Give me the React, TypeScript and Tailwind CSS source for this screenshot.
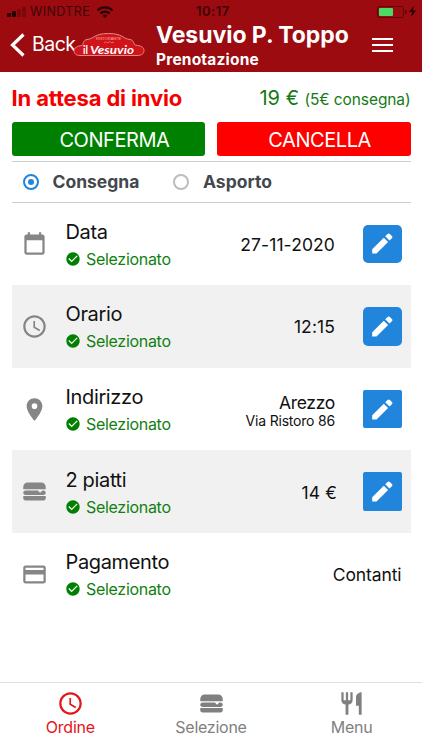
import React, { useState } from 'react';
import {
    MdAccessTime,
    MdCheckCircle,
    MdLocationOn,
    MdPayment,
    MdRestaurant,
    MdWifi,
} from 'react-icons/md';

const BurgerIcon: React.FC<{ className?: string }> = ({ className }) => (
    <svg viewBox="0 0 24 24" fill="currentColor" className={className}>
        <path d="M2 16H22V18C22 19.11 21.11 20 20 20H4C2.89 20 2 19.11 2 18V16M6 4H18C20.22 4 22 5.78 22 8V10H2V8C2 5.78 3.78 4 6 4M4 11H15L17 13L19 11H20C21.11 11 22 11.89 22 13C22 14.11 21.11 15 20 15H4C2.89 15 2 14.11 2 13C2 11.89 2.89 11 4 11Z" />
    </svg>
);

const CalendarIcon: React.FC<{ className?: string }> = ({ className }) => (
    <svg viewBox="0 0 24 24" fill="currentColor" className={className}>
        <path d="M19 20H5V9H19M16 2V4H8V2H6V4H5C3.89 4 3 4.89 3 6V20C3 21.1 3.9 22 5 22H19C20.1 22 21 21.1 21 20V6C21 4.89 20.1 4 19 4H18V2" />
    </svg>
);

const PencilIcon: React.FC<{ className?: string }> = ({ className }) => (
    <svg viewBox="0 0 21 21" fill="currentColor" className={className}>
        <path d="M0.2 20.6V16.3L11.8 4.7L16.1 9L4.5 20.6H0.2Z" />
        <path d="M13.2 3.3L15.6 0.9C16.3 0.2 17.2 0.2 17.9 0.9L19.9 2.9C20.6 3.6 20.6 4.5 19.9 5.2L17.5 7.6L13.2 3.3Z" />
    </svg>
);

const Logo = () => (
    <svg viewBox="0 0 72 26" className="w-[72px] h-[26px] shrink-0">
        <path
            d="M9 13.5C10.5 12.5 10 8 14 7.5C21 7 21 1.5 35.5 1.5S50 7 57 7.5C61 8 60.5 12.5 62.5 13.2C68 13.5 71 15.5 71 18.5S69 23.5 64 23.5H7C3 23.5 1 21.5 1 18.8S4 14 9 13.5Z"
            fill="#d0141a"
            stroke="#e08a88"
            strokeWidth="1"
        />
        <text x="23" y="7.6" fontSize="3.8" textLength="25" fill="#f3b5b3" fontFamily="Liberation Sans, sans-serif">RISTORANTE</text>
        <path d="M31 11L33 9.8L34 10.8L37 9.6L38 10.7L41 10.4" fill="none" stroke="#ee8583" strokeWidth="0.7" />
        <text x="10" y="21.5" fontSize="11.5" textLength="5" lengthAdjust="spacingAndGlyphs" fontWeight="700" fill="#fff" fontFamily="Lato, sans-serif">il</text>
        <text x="17" y="21.5" fontSize="11.5" textLength="44" lengthAdjust="spacingAndGlyphs" fontWeight="700" fontStyle="italic" fill="#fff" fontFamily="Lato, sans-serif">Vesuvio</text>
    </svg>
);

const StatusBar = () => (
    <div className="h-6 flex items-center relative text-[#3d0306] text-[12px]">
        <div className="ml-[7px] flex items-end gap-[1.5px] w-[23px]">
            <span className="w-[3.5px] h-[4px] rounded-[1px] bg-[#250204]" />
            <span className="w-[3.5px] h-[6px] rounded-[1px] bg-[#250204]" />
            <span className="w-[3.5px] h-[8px] rounded-[1px] bg-[#7b080b]" />
            <span className="w-[3.5px] h-[10px] rounded-[1px] bg-[#7b080b]" />
        </div>
        <span className="w-[61px] text-[12.5px] tracking-[0.4px]">WINDTRE</span>
        <MdWifi className="ml-[5px] w-[18px] h-[18px] text-[#250204]" />
        <span className="absolute left-[196px] text-[13px] font-semibold tracking-[0.5px]">10:17</span>
        <div className="absolute left-[377px] top-[6px] w-[27px] h-[12px] rounded-[3px] border border-[#5b0508] p-px">
            <div className="w-[14px] h-full rounded-[1px] bg-[#4cd964]" />
        </div>
        <span className="absolute left-[405px] top-[10px] w-[1.5px] h-[4px] rounded-r bg-[#5b0508]" />
        <svg viewBox="0 0 7 11" className="absolute left-[409px] top-[6px] w-[7px] h-[11px]" fill="#250204">
            <path d="M4.5 0L0 6H3L2.2 11L7 4.5H4L4.5 0Z" />
        </svg>
    </div>
);

const Header = () => (
    <header className="h-[71.5px] bg-[#9b0b10] text-white shrink-0">
        <StatusBar />
        <div className="flex h-[47px]">
            <button className="flex items-center pl-[10px] h-[41px] w-[73px] shrink-0">
                <svg viewBox="0 0 15 24" className="w-[15px] h-[24px] shrink-0" fill="none" stroke="currentColor" strokeWidth="3.2">
                    <path d="M13.5 1.5L2.5 12L13.5 22.5" />
                </svg>
                <span className="ml-[7px] text-[19.5px] tracking-[-0.5px]">Back</span>
            </button>
            <div className="pt-[8px] w-[83px] shrink-0">
                <Logo />
            </div>
            <div className="w-[216px] shrink-0">
                <h1 className="text-[23px] leading-[23px] font-bold tracking-[-0.05px] whitespace-nowrap">Vesuvio P. Toppo</h1>
                <p className="pt-px text-[15.5px] leading-[24px] font-bold tracking-[0.2px]">Prenotazione</p>
            </div>
            {/* hamburger */}
            <button className="mt-[14px] h-[14px] w-[21px] flex flex-col justify-between shrink-0">
                <span className="h-[2px] w-full bg-white" />
                <span className="h-[2px] w-full bg-white" />
                <span className="h-[2px] w-full bg-white" />
            </button>
        </div>
    </header>
);

const ROWS = [
    { icon: CalendarIcon, title: 'Data', value: '27-11-2020' },
    { icon: MdAccessTime, title: 'Orario', value: '12:15' },
    { icon: MdLocationOn, title: 'Indirizzo', value: 'Arezzo', note: 'Via Ristoro 86', square: true },
    { icon: BurgerIcon, title: '2 piatti', value: '14 €', square: true },
    { icon: MdPayment, title: 'Pagamento', value: 'Contanti', fixed: true },
];

const TABS = [
    { icon: MdAccessTime, label: 'Ordine' },
    { icon: BurgerIcon, label: 'Selezione' },
    { icon: MdRestaurant, label: 'Menu' },
];

const App: React.FC = () => {
    const [mode, setMode] = useState('Consegna');
    const [tab, setTab] = useState('Ordine');

    return (
        <div className="w-full h-screen flex flex-col bg-white overflow-hidden font-['Inter',sans-serif] text-[#111]">
            <Header />

            <main className="flex-1 px-[11.5px]">
                <div className="h-[50.5px] flex items-center justify-between">
                    <h2 className="pt-[3px] text-[22px] font-bold text-[#f50000] tracking-[-0.15px]">In attesa di invio</h2>
                    <p className="pt-[3px] text-[#147a14] whitespace-nowrap">
                        <span className="text-[20px]">19 €</span>
                        <span className="ml-[5.5px] text-[15.5px] tracking-[-0.1px]">(5€ consegna)</span>
                    </p>
                </div>

                <div className="flex gap-[11.5px] text-white text-[20px] tracking-[-0.45px]">
                    <button className="flex-1 h-[34px] pt-[2px] pl-3 rounded-[3px] bg-[#008000]">CONFERMA</button>
                    <button className="flex-1 h-[34px] pt-[2px] pl-3 rounded-[3px] bg-[#ff0000]">CANCELLA</button>
                </div>

                <div className="mt-[5px] h-[42px] border-y border-[#cfcfcf] flex items-center pl-[11px]">
                    {['Consegna', 'Asporto'].map(name => (
                        <button key={name} onClick={() => setMode(name)} className="flex items-center w-[150.5px]">
                            <span className={`w-[16px] h-[16px] rounded-full border-2 flex items-center justify-center ${mode === name ? 'border-[#2185d9]' : 'border-[#bdbdbd]'}`}>
                                {mode === name && <span className="w-[6px] h-[6px] rounded-full bg-[#2185d9]" />}
                            </span>
                            <span className="ml-[14px] pt-px text-[17.5px] font-bold text-[#43484d]">{name}</span>
                        </button>
                    ))}
                </div>

                {/* order steps */}
                <div className="-mt-[0.5px] pt-[0.1px]">
                    {ROWS.map(({ icon: Icon, title, value, note, square, fixed }) => (
                        <div key={title} className="h-[82.6px] flex items-center px-[9px] even:bg-[#f1f1f1]">
                            <Icon className="w-[27px] h-[27px] shrink-0 text-[#868686]" />
                            <div className="ml-[18px] pt-[3px] flex-1">
                                <div className="text-[20px] leading-[27px] tracking-[-0.35px]">{title}</div>
                                <div className="flex items-center text-[16px] leading-[26px] tracking-[-0.3px] text-[#118011]">
                                    <MdCheckCircle className="w-[16px] h-[16px] -ml-[0.5px] mr-[5px] text-[#008000]" />
                                    Selezionato
                                </div>
                            </div>
                            <div className={`pt-[2px] text-right ${title === '2 piatti' ? 'mr-[26px]' : fixed ? '' : 'mr-[28px]'}`}>
                                <div className={note ? 'pt-[2px] text-[17.5px] leading-[19px] tracking-[-0.3px]' : fixed ? 'text-[17.5px] tracking-[-0.1px]' : 'text-[17.5px] tracking-[0.1px]'}>{value}</div>
                                {note && <div className="text-[14px] leading-[18px] tracking-[-0.2px]">{note}</div>}
                            </div>
                            {!fixed && (
                                <button className={`w-[38.5px] h-[38.5px] bg-[#2185dc] text-white flex items-center justify-center ${square ? 'rounded-[2px]' : 'rounded-[5px]'}`}>
                                    <PencilIcon className="w-[21px] h-[21px]" />
                                </button>
                            )}
                        </div>
                    ))}
                </div>
            </main>

            <nav className="h-[68px] border-t border-[#dfdfdf] flex shrink-0">
                {TABS.map(({ icon: Icon, label }) => (
                    <button
                        key={label}
                        onClick={() => setTab(label)}
                        className={`flex-1 flex flex-col items-center pt-[7px] ${tab === label ? 'text-[#e5151a]' : 'text-[#808080]'}`}
                    >
                        <Icon className="w-[27px] h-[27px]" />
                        <span className="text-[16px] leading-[20px] tracking-[-0.25px]">{label}</span>
                    </button>
                ))}
            </nav>
        </div>
    );
};

export default App;
